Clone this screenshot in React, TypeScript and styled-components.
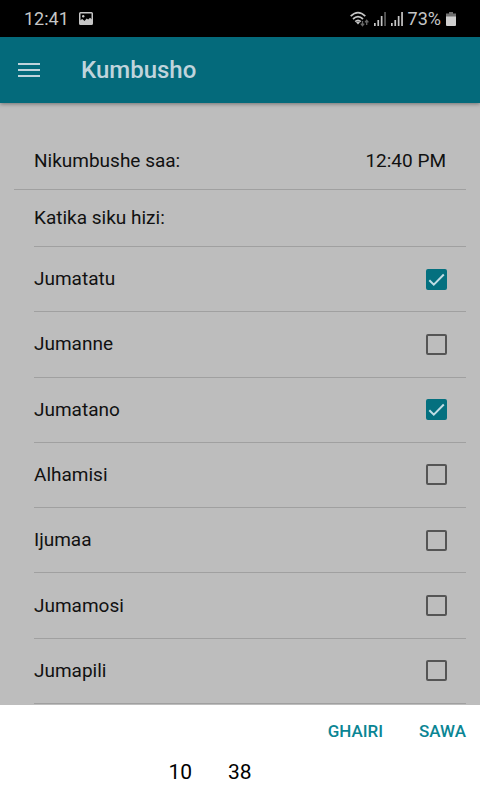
import React, { useState } from "react";
import styled, { createGlobalStyle } from "styled-components";

const GlobalStyle = createGlobalStyle`
  *, *::before, *::after { box-sizing: border-box; }
  body { margin: 0; background: #bdbdbd; }
  body, button, input { font-family: Roboto, "Liberation Sans", sans-serif; }
`;

const Screen = styled.div`
  min-height: 100vh;
  display: flex;
  flex-direction: column;
  color: #111;
  font-size: 19px;
  line-height: 24px;
`;

const StatusBar = styled.div`
  display: flex;
  align-items: center;
  justify-content: space-between;
  height: 37px;
  padding: 0 24px;
  background: #000;
  color: #c6c6c6;
  font-size: 18px;
`;

const StatusGroup = styled.div<{ $gap: number }>`
  display: flex;
  align-items: center;
  gap: ${(p) => p.$gap}px;
  svg { display: block; }
`;

const Toolbar = styled.header`
  display: flex;
  align-items: center;
  gap: 40px;
  height: 66px;
  padding: 0 17px;
  background: #046a7b;
  color: #c0d4dc;
  box-shadow: 0 1px 4px rgba(0, 0, 0, 0.4);
`;

const PlainButton = styled.button`
  padding: 0;
  border: 0;
  background: none;
  color: inherit;
  font-size: inherit;
  line-height: inherit;
  cursor: pointer;
`;

const MenuButton = styled(PlainButton)`
  display: block;
  width: 24px;
  height: 24px;
  svg { display: block; }
`;

const Title = styled.h1`
  margin: 0;
  font-size: 24px;
  line-height: 28px;
  font-weight: 500;
`;

const Content = styled.main`
  flex: 1;
  display: flex;
  flex-direction: column;
  padding: 29px 14px 1px;
`;

const Row = styled.div`
  display: flex;
  align-items: center;
  justify-content: space-between;
  height: 58px;
  padding: 0 20px;
  border-bottom: 1px solid #a0a0a0;
`;

const DaySection = styled.section`
  flex: 1;
  display: flex;
  flex-direction: column;
  padding-left: 20px;
`;

const DayHeading = styled.h2`
  display: flex;
  align-items: center;
  height: 57px;
  margin: 0;
  border-bottom: 1px solid #a0a0a0;
  font-size: inherit;
  font-weight: 400;
`;

const DayList = styled.ul`
  flex: 1;
  display: flex;
  flex-direction: column;
  margin: 0;
  padding: 0;
  list-style: none;
`;

const DayItem = styled.li`
  flex: 1;
  display: flex;
  min-height: 48px;
  border-bottom: 1px solid #a0a0a0;
`;

const DayLabel = styled.label`
  flex: 1;
  display: flex;
  align-items: center;
  justify-content: space-between;
  padding-right: 19px;
  cursor: pointer;
`;

const CheckWrap = styled.span`
  display: grid;
  place-items: center;
  & > * { grid-area: 1 / 1; }
  svg { pointer-events: none; }
`;

const Checkbox = styled.input`
  appearance: none;
  width: 21px;
  height: 21px;
  margin: 0;
  border: 2px solid #555;
  border-radius: 2px;
  cursor: pointer;
  &:checked {
    border-color: #04707f;
    background: #04707f;
  }
`;

const Sheet = styled.section`
  display: flex;
  flex-direction: column;
  height: 95px;
  background: #fff;
`;

const SheetActions = styled.div`
  display: flex;
  justify-content: flex-end;
  gap: 36px;
  padding: 14px 14px 0;
`;

const ActionButton = styled(PlainButton)`
  color: #0a8594;
  font-size: 17px;
  font-weight: 500;
`;

const PickerWheels = styled.div`
  display: flex;
  justify-content: center;
  gap: 36px;
  padding: 17px 60px 0 0;
`;

const WheelValue = styled(PlainButton)`
  color: #000;
  font-size: 21px;
`;

const days = ["Jumatatu", "Jumanne", "Jumatano", "Alhamisi", "Ijumaa", "Jumamosi", "Jumapili"];

const PictureIcon = () => (
  <svg width="14" height="13" viewBox="0 0 14 13" aria-hidden="true">
    <rect x="0.75" y="0.75" width="12.5" height="11.5" rx="0.8" fill="none" stroke="#c6c6c6" strokeWidth="1.5" />
    <circle cx="4.2" cy="4.2" r="1.2" fill="#c6c6c6" />
    <path d="M1 8.6 3.2 7l2.4 2 2-2.4 1.6.8L11 5.8 13 7.6V12H1z" fill="#c6c6c6" />
  </svg>
);

const WifiIcon = () => (
  <svg width="20" height="16" viewBox="0 0 20 16" aria-hidden="true">
    <g fill="none" stroke="#c6c6c6" strokeWidth="1.7">
      <path d="M1.7 5.2Q9 -1.8 16.3 5.2" />
      <path d="M4 8Q9 3.4 14 8" />
      <path d="M6.2 10.6Q9 8 11.8 10.6" />
    </g>
    <path d="m7 11.2 2 2.3 2-2.3q-2-1.4-4 0z" fill="#c6c6c6" />
    <path d="M13.5 10v4.5M11.8 12.7l1.7 2 1.7-2M17.7 14V9.5M16 11.3l1.7-2 1.7 2" fill="none" stroke="#686868" strokeWidth="1.3" />
  </svg>
);

const SignalIcon = ({ level }: { level: number }) => (
  <svg width="12" height="14" viewBox="0 0 12 14" aria-hidden="true">
    {[3, 6, 10, 14].map((h, i) => (
      <rect key={h} x={i * 3.4} y={14 - h} width="1.7" height={h} fill={i < level ? "#c6c6c6" : "#5c5c5c"} />
    ))}
  </svg>
);

const BatteryIcon = () => (
  <svg width="10" height="14" viewBox="0 0 10 14" aria-hidden="true">
    <path d="M3 0h4v1.4h3V5H0V1.4h3z" fill="#707070" />
    <path d="M0 4.5h10V13q0 1-1 1H1q-1 0-1-1z" fill="#d0d0d0" />
  </svg>
);

export default function App() {
  const [selected, setSelected] = useState<string[]>(["Jumatatu", "Jumatano"]);
  const toggle = (day: string) =>
    setSelected((prev) => (prev.includes(day) ? prev.filter((d) => d !== day) : [...prev, day]));

  return (
    <>
      <GlobalStyle />
      <Screen>
        <StatusBar>
          <StatusGroup $gap={10}>
            <span>12:41</span>
            <PictureIcon />
          </StatusGroup>
          <StatusGroup $gap={5}>
            <WifiIcon />
            <SignalIcon level={3} />
            <SignalIcon level={4} />
            <span>73%</span>
            <BatteryIcon />
          </StatusGroup>
        </StatusBar>
        <Toolbar>
          <MenuButton type="button" aria-label="Menyu">
            <svg width="24" height="24" viewBox="0 0 24 24" aria-hidden="true">
              <path d="M1 6h22M1 12h22M1 18h22" stroke="currentColor" strokeWidth="2" />
            </svg>
          </MenuButton>
          <Title>Kumbusho</Title>
        </Toolbar>
        <Content>
          <Row>
            <span>Nikumbushe saa:</span>
            <PlainButton type="button">12:40 PM</PlainButton>
          </Row>
          <DaySection>
            <DayHeading>Katika siku hizi:</DayHeading>
            <DayList>
              {days.map((day) => (
                <DayItem key={day}>
                  <DayLabel>
                    {day}
                    <CheckWrap>
                      <Checkbox type="checkbox" checked={selected.includes(day)} onChange={() => toggle(day)} />
                      {selected.includes(day) && (
                        <svg width="21" height="21" viewBox="0 0 21 21" aria-hidden="true">
                          <path d="m3.3 11.2 4.5 4.5L17.8 5.5" fill="none" stroke="#c0dce4" strokeWidth="2" />
                        </svg>
                      )}
                    </CheckWrap>
                  </DayLabel>
                </DayItem>
              ))}
            </DayList>
          </DaySection>
        </Content>
        <Sheet>
          <SheetActions>
            <ActionButton type="button">GHAIRI</ActionButton>
            <ActionButton type="button">SAWA</ActionButton>
          </SheetActions>
          <PickerWheels>
            <WheelValue type="button">10</WheelValue>
            <WheelValue type="button">38</WheelValue>
          </PickerWheels>
        </Sheet>
      </Screen>
    </>
  );
}
